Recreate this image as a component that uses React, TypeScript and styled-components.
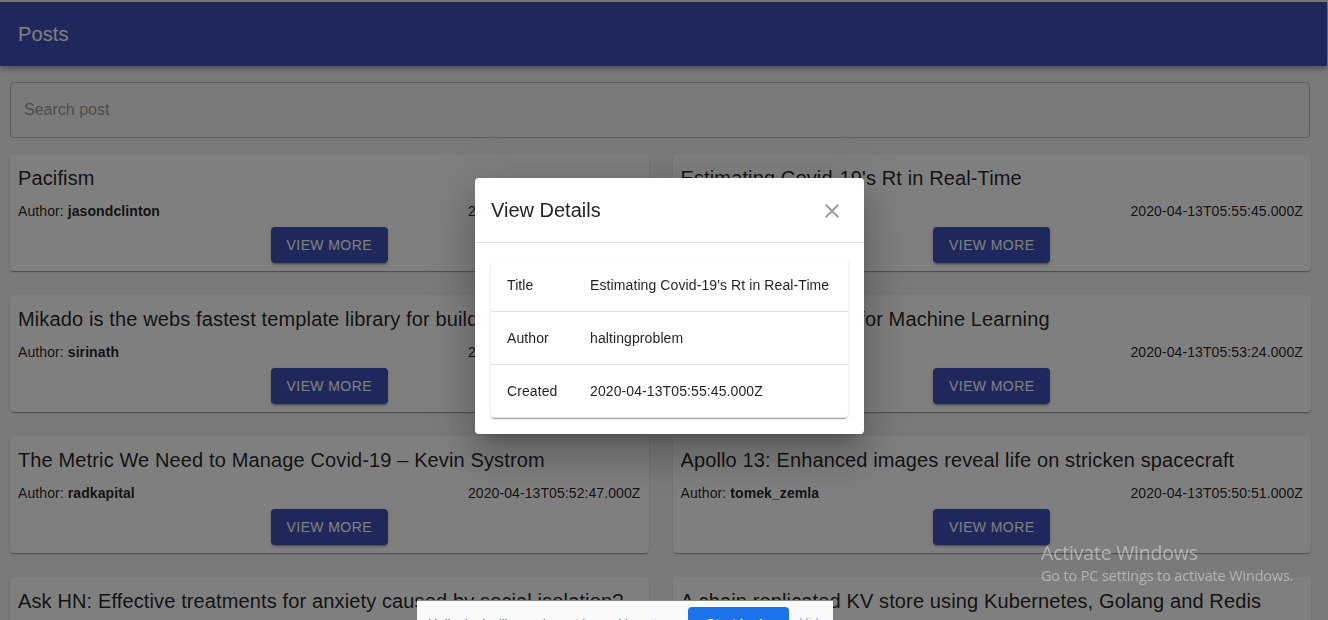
import React from "react";
import styled, { createGlobalStyle } from "styled-components";

const GlobalStyle = createGlobalStyle`
  html, body { margin: 0; padding: 0; }
  body {
    background: #f5f5f5;
    font-family: "Liberation Sans", Arial, sans-serif;
    color: rgba(0,0,0,0.87);
    overflow: hidden;
  }
  * { box-sizing: border-box; }
`;

const Page = styled.div`
  padding-top: 2px;
  min-height: 620px;
`;

const AppBar = styled.header`
  height: 64px;
  background: #3f51b5;
  display: flex;
  align-items: center;
  padding: 0 18px;
  margin-right: 1px;
  box-shadow: 0 2px 4px -1px rgba(0,0,0,0.2), 0 4px 5px 0 rgba(0,0,0,0.14), 0 1px 10px 0 rgba(0,0,0,0.12);
`;

const AppTitle = styled.h1`
  margin: 0;
  font-size: 20px;
  font-weight: 400;
  color: #fff;
  letter-spacing: 0.1px;
`;

const Main = styled.main`
  padding: 16px 17px 0 10px;
`;

const Search = styled.input`
  display: block;
  width: calc(100% - 1px);
  height: 56px;
  border: 1px solid rgba(0,0,0,0.23);
  border-radius: 4px;
  background: transparent;
  padding: 0 13px;
  font-family: "Liberation Sans", Arial, sans-serif;
  font-size: 16px;
  color: rgba(0,0,0,0.87);
  outline: none;
  &::placeholder { color: rgba(0,0,0,0.4); }
`;

const Grid = styled.div`
  margin-top: 16px;
  display: grid;
  grid-template-columns: repeat(2, minmax(0, 1fr));
  column-gap: 24px;
  row-gap: 24px;
`;

const Card = styled.div`
  min-width: 0;
  background: #fff;
  border-radius: 4px;
  padding: 8px;
  height: 117px;
  display: flex;
  flex-direction: column;
  box-shadow: 0 2px 1px -1px rgba(0,0,0,0.2), 0 1px 1px 0 rgba(0,0,0,0.14), 0 1px 3px 0 rgba(0,0,0,0.12);
`;

const CardTitle = styled.div`
  font-size: 20px;
  line-height: 32px;
  letter-spacing: 0.13px;
  white-space: nowrap;
  overflow: hidden;
`;

const MetaRow = styled.div`
  margin-top: 7px;
  display: flex;
  justify-content: space-between;
  font-size: 14px;
  line-height: 20px;
  letter-spacing: 0.09px;
`;

const Bold = styled.b`
  font-weight: 700;
`;

const ButtonRow = styled.div`
  margin-top: 6px;
  display: flex;
  justify-content: center;
`;

const ViewButton = styled.button`
  height: 36px;
  padding: 0 16px;
  border: none;
  border-radius: 4px;
  background: #3f51b5;
  color: #fff;
  font-family: "Liberation Sans", Arial, sans-serif;
  font-size: 14px;
  letter-spacing: 0.4px;
  text-transform: uppercase;
  box-shadow: 0 3px 1px -2px rgba(0,0,0,0.2), 0 2px 2px 0 rgba(0,0,0,0.14), 0 1px 5px 0 rgba(0,0,0,0.12);
`;

const Backdrop = styled.div`
  position: fixed;
  inset: 0;
  background: rgba(0,0,0,0.5);
`;

const Dialog = styled.div`
  position: fixed;
  top: 178px;
  left: 475px;
  width: 389px;
  background: #fff;
  border-radius: 4px;
  box-shadow: 0 11px 15px -7px rgba(0,0,0,0.2), 0 24px 38px 3px rgba(0,0,0,0.14), 0 9px 46px 8px rgba(0,0,0,0.12);
`;

const DialogHeader = styled.div`
  height: 65px;
  display: flex;
  align-items: center;
  justify-content: space-between;
  padding: 1px 20px 0 16px;
  border-bottom: 1px solid #e0e0e0;
`;

const DialogTitle = styled.h2`
  margin: 0;
  font-size: 20px;
  font-weight: 400;
  color: rgba(0,0,0,0.87);
`;

const CloseIcon = styled.svg`
  width: 24px;
  height: 24px;
  display: block;
`;

const DialogBody = styled.div`
  padding: 16px;
`;

const Paper = styled.div`
  border-radius: 4px;
  overflow: hidden;
  box-shadow: 0 2px 1px -1px rgba(0,0,0,0.2), 0 1px 1px 0 rgba(0,0,0,0.14), 0 1px 3px 0 rgba(0,0,0,0.12);
`;

const Table = styled.table`
  width: 100%;
  border-collapse: collapse;
`;

const Cell = styled.td<{ $label?: boolean }>`
  padding: 16px;
  width: ${(p) => (p.$label ? "83px" : "auto")};
  font-size: 14px;
  line-height: 20px;
  letter-spacing: 0.1px;
  color: rgba(0,0,0,0.87);
  border-bottom: 1px solid rgba(224,224,224,1);
  white-space: nowrap;
`;

const Watermark = styled.div`
  position: fixed;
  left: 1041px;
  top: 540px;
  color: rgba(255,255,255,0.42);
  font-family: "Open Sans", "Noto Sans", sans-serif;
  pointer-events: none;
`;

const WmTitle = styled.div`
  font-size: 19.5px;
  line-height: 26px;
  letter-spacing: -0.2px;
`;

const WmSub = styled.div`
  font-size: 14.4px;
  line-height: 20px;
  letter-spacing: -0.1px;
`;

const Toast = styled.div`
  position: fixed;
  left: 417px;
  top: 600px;
  width: 416px;
  height: 44px;
  background: #fafafa;
  border-top: 1px solid #888;
  display: flex;
  align-items: flex-start;
  padding: 6px 0 0 11px;
  font-family: "Liberation Sans", Arial, sans-serif;
`;

const ToastText = styled.div`
  width: 260px;
  flex: none;
  font-size: 13px;
  color: #5f6368;
  padding-top: 9px;
  white-space: nowrap;
  overflow: hidden;
`;

const ToastButton = styled.button`
  width: 101px;
  height: 32px;
  flex: none;
  border: none;
  border-radius: 4px;
  background: #1a73e8;
  color: #fff;
  font-family: "Liberation Sans", Arial, sans-serif;
  font-weight: 700;
  font-size: 13px;
  padding: 0;
`;

const ToastLink = styled.span`
  margin: 8px 12px 0 10px;
  font-size: 13px;
  color: #9aa6f5;
`;

type Post = { title: string; author: string; created: string };

const posts: Post[] = [
  { title: "Pacifism", author: "jasondclinton", created: "2020-04-13T05:56:08.000Z" },
  { title: "Estimating Covid-19's Rt in Real-Time", author: "haltingproblem", created: "2020-04-13T05:55:45.000Z" },
  { title: "Mikado is the webs fastest template library for building user interfaces", author: "sirinath", created: "2020-04-13T05:54:39.000Z" },
  { title: "Jupyter Workbooks for Machine Learning", author: "lrhegeba", created: "2020-04-13T05:53:24.000Z" },
  { title: "The Metric We Need to Manage Covid-19 \u2013 Kevin Systrom", author: "radkapital", created: "2020-04-13T05:52:47.000Z" },
  { title: "Apollo 13: Enhanced images reveal life on stricken spacecraft", author: "tomek_zemla", created: "2020-04-13T05:50:51.000Z" },
  { title: "Ask HN: Effective treatments for anxiety caused by social isolation?", author: "throwaway", created: "2020-04-13T05:49:12.000Z" },
  { title: "A chain replicated KV store using Kubernetes, Golang and Redis", author: "sosaboy", created: "2020-04-13T05:48:30.000Z" },
];

const selected = posts[1];

export default function App() {
  return (
    <>
      <GlobalStyle />
      <Page>
        <AppBar>
          <AppTitle>Posts</AppTitle>
        </AppBar>
        <Main>
          <Search placeholder="Search post" readOnly />
          <Grid>
            {posts.map((p) => (
              <Card key={p.title}>
                <CardTitle>{p.title}</CardTitle>
                <MetaRow>
                  <span>
                    Author: <Bold>{p.author}</Bold>
                  </span>
                  <span>{p.created}</span>
                </MetaRow>
                <ButtonRow>
                  <ViewButton>View More</ViewButton>
                </ButtonRow>
              </Card>
            ))}
          </Grid>
        </Main>
      </Page>
      <Backdrop />
      <Dialog>
        <DialogHeader>
          <DialogTitle>View Details</DialogTitle>
          <CloseIcon viewBox="0 0 24 24">
            <path
              d="M19 6.41 17.59 5 12 10.59 6.41 5 5 6.41 10.59 12 5 17.59 6.41 19 12 13.41 17.59 19 19 17.59 13.41 12z"
              fill="#9e9e9e"
            />
          </CloseIcon>
        </DialogHeader>
        <DialogBody>
          <Paper>
            <Table>
              <tbody>
                <tr>
                  <Cell $label>Title</Cell>
                  <Cell>{selected.title}</Cell>
                </tr>
                <tr>
                  <Cell $label>Author</Cell>
                  <Cell>{selected.author}</Cell>
                </tr>
                <tr>
                  <Cell $label>Created</Cell>
                  <Cell>{selected.created}</Cell>
                </tr>
              </tbody>
            </Table>
          </Paper>
        </DialogBody>
      </Dialog>
      <Watermark>
        <WmTitle>Activate Windows</WmTitle>
        <WmSub>Go to PC settings to activate Windows.</WmSub>
      </Watermark>
      <Toast>
        <ToastText>Hello, looks like you're not logged in yet</ToastText>
        <ToastButton>Start login</ToastButton>
        <ToastLink>Hide</ToastLink>
      </Toast>
    </>
  );
}
